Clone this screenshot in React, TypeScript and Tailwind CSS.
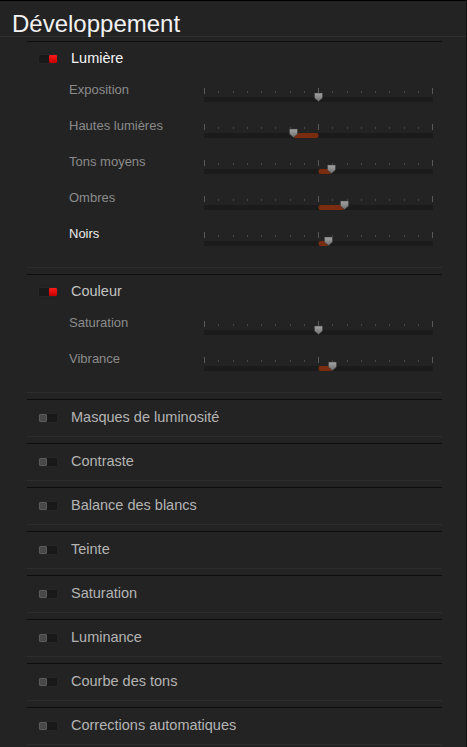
import React from 'react'

const FONT = { fontFamily: '"Liberation Sans", Arial, sans-serif' }

const LUMIERE = [
  { label: 'Exposition', value: 114 },
  { label: 'Hautes lumières', value: 89 },
  { label: 'Tons moyens', value: 127 },
  { label: 'Ombres', value: 140 },
  { label: 'Noirs', value: 124, active: true },
]

const COULEUR = [
  { label: 'Saturation', value: 114 },
  { label: 'Vibrance', value: 128 },
]

const COLLAPSED = [
  'Masques de luminosité',
  'Contraste',
  'Balance des blancs',
  'Teinte',
  'Saturation',
  'Luminance',
  'Courbe des tons',
  'Corrections automatiques',
]

function Toggle({ on }: { on?: boolean }) {
  return (
    <div className="w-[20px] h-[10px] shrink-0 rounded-[1px] bg-[#191919] border border-[#262626] flex items-center">
      {on ? (
        <div className="ml-auto w-[8px] h-[8px] bg-gradient-to-b from-[#ff1a1a] to-[#c40000] rounded-[1px]" />
      ) : (
        <div className="w-[8px] h-[8px] bg-[#484848] border border-[#5a5a5a] rounded-[1px]" />
      )}
    </div>
  )
}

function Slider({ value, id }: { value: number; id: string }) {
  const c = 114.5
  const x = value + 0.5
  const ticks = Array.from({ length: 17 }, (_, i) => Math.round(i * 14.25))
  return (
    <svg width="229" height="15" className="mt-[16px] shrink-0 block">
      <defs>
        <linearGradient id={id} x1="0" y1="0" x2="0" y2="1">
          <stop offset="0" stopColor="#a6a6a6" />
          <stop offset="1" stopColor="#6c6c6c" />
        </linearGradient>
      </defs>
      <rect x="0" y="9" width="229" height="5" fill="#1b1b1b" />
      {value !== 114 && (
        <rect x={Math.min(c, x)} y="9" width={Math.abs(x - c)} height="5" rx="2" fill="#7a2c10" />
      )}
      {ticks.map((t, i) => {
        const big = i === 0 || i === 8 || i === 16
        return (
          <rect
            key={i}
            x={t}
            y={big ? 0 : 3}
            width="1"
            height={big ? 6 : 2}
            fill={big ? '#595959' : '#474747'}
          />
        )
      })}
      <path
        d={`M${x - 4} 5 H${x + 4} V10 L${x} 13.5 L${x - 4} 10 Z`}
        fill={`url(#${id})`}
        stroke="#3e3e3e"
        strokeWidth="0.6"
      />
    </svg>
  )
}

function OpenSection({
  title,
  titleColor,
  rows,
  name,
}: {
  title: string
  titleColor: string
  rows: { label: string; value: number; active?: boolean }[]
  name: string
}) {
  return (
    <div className="border-t border-b border-t-[#0d0d0d] border-b-[#2d2d2d] pb-[15px]">
      <div className="h-[30px] pt-1 flex items-center">
        <div className="ml-[11px]">
          <Toggle on />
        </div>
        <span className={`ml-[13px] text-[14.5px] ${titleColor}`}>{title}</span>
      </div>
      {rows.map((r, i) => (
        <div key={r.label} className="h-9 flex items-start">
          <div
            className={`w-[177px] pl-[42px] h-9 flex items-center text-[13px] whitespace-nowrap shrink-0 ${
              r.active ? 'text-[#ededed]' : 'text-[#8b8b8b]'
            }`}
          >
            {r.label}
          </div>
          <Slider value={r.value} id={`${name}${i}`} />
        </div>
      ))}
    </div>
  )
}

export default function App() {
  return (
    <div
      className="w-[467px] h-[747px] overflow-hidden bg-[#232323] border-r border-[#101010]"
      style={FONT}
    >
      <div className="h-[37px] border-t border-b border-t-black border-b-[#2f2f2f] pl-3 pt-[11px]">
        <h1 className="text-[24px] leading-none text-[#f2f2f2]">Développement</h1>
      </div>

      <div className="mt-[4px] pl-[27px] pr-[24px] flex flex-col gap-[6px]">
        <OpenSection title="Lumière" titleColor="text-[#f5f5f5]" rows={LUMIERE} name="l" />
        <OpenSection title="Couleur" titleColor="text-[#c2c2c2]" rows={COULEUR} name="c" />
        {COLLAPSED.map((t) => (
          <div
            key={t}
            className="h-[38px] border-t border-b border-t-[#0d0d0d] border-b-[#2d2d2d] flex items-center"
          >
            <div className="ml-[11px]">
              <Toggle />
            </div>
            <span className="ml-[13px] text-[14.5px] text-[#b4b4b4]">{t}</span>
          </div>
        ))}
      </div>
    </div>
  )
}
